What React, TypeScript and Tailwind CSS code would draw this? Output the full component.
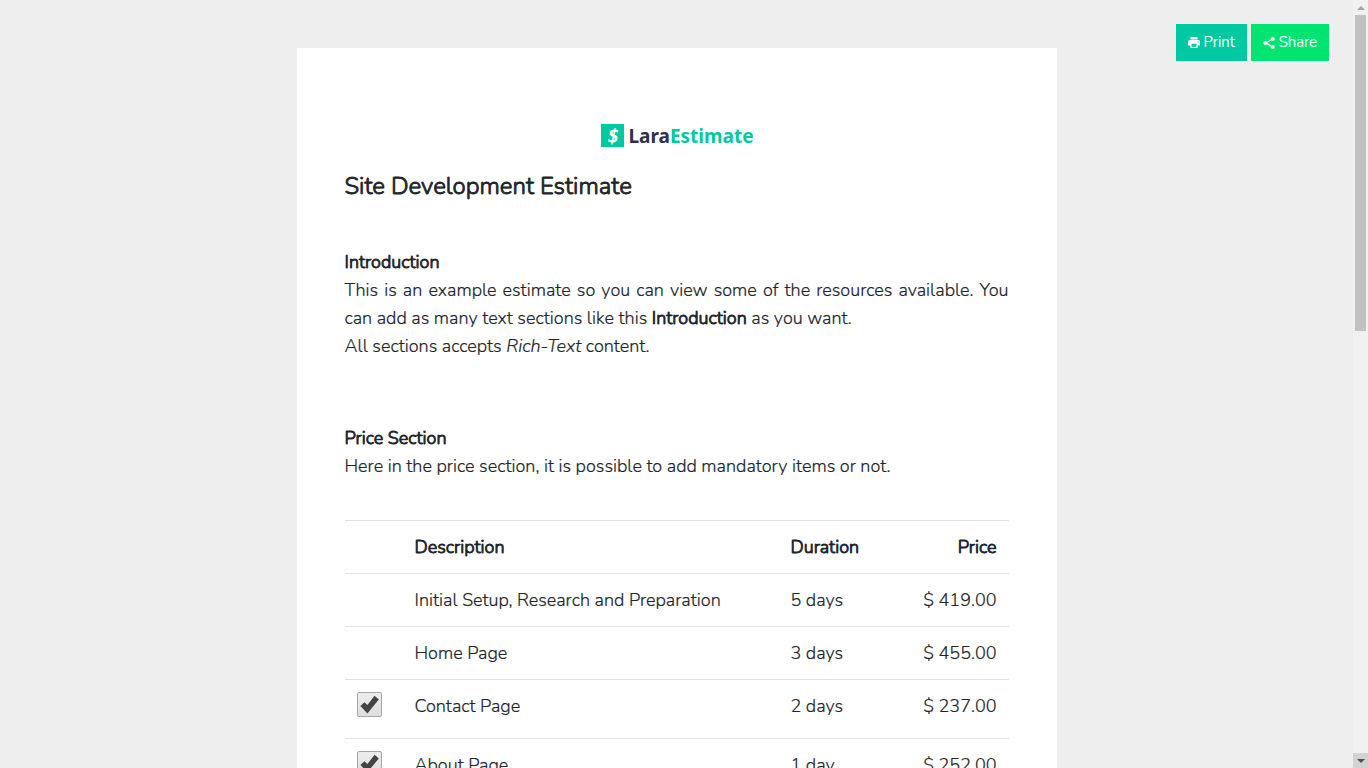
import { useState } from 'react';

type Item = {
  id: number;
  description: string;
  duration: string;
  price: number;
  optional: boolean;
};

const items: Item[] = [
  { id: 1, description: 'Initial Setup, Research and Preparation', duration: '5 days', price: 419, optional: false },
  { id: 2, description: 'Home Page', duration: '3 days', price: 455, optional: false },
  { id: 3, description: 'Contact Page', duration: '2 days', price: 237, optional: true },
  { id: 4, description: 'About Page', duration: '1 day', price: 252, optional: true },
];

// light face thickened with a stroke, keeps the light widths
const strong = 'font-light [-webkit-text-stroke:0.9px_currentColor]';

function Logo() {
  return (
    <div className="flex items-start justify-center gap-1 pl-[2px] font-['Noto_Sans','Open_Sans',sans-serif] text-[19px] leading-6 font-bold [-webkit-text-stroke:0]">
      <span className="flex size-[23px] items-center justify-center bg-[#00c9a0] text-white italic">$</span>
      <span className="text-[#32304a]">
        Lara<span className="text-[#00c9a0]">Estimate</span>
      </span>
    </div>
  );
}

function PrintIcon() {
  return (
    <svg viewBox="2 3 20 18" className="h-[11px] w-3" fill="currentColor" aria-hidden="true">
      <path d="M19 8H5c-1.66 0-3 1.34-3 3v6h4v4h12v-4h4v-6c0-1.66-1.34-3-3-3zm-3 11H8v-5h8v5zm3-7c-.55 0-1-.45-1-1s.45-1 1-1 1 .45 1 1-.45 1-1 1zm-1-9H6v4h12V3z" />
    </svg>
  );
}

function ShareIcon() {
  return (
    <svg viewBox="2 2 20 20" className="size-3" fill="currentColor" aria-hidden="true">
      <path d="m7 12 11-7M7 12l11 7" stroke="currentColor" strokeWidth="2.2" />
      <circle cx="6" cy="12" r="3.3" />
      <circle cx="18.5" cy="5.2" r="3.2" />
      <circle cx="18.5" cy="18.8" r="3.2" />
    </svg>
  );
}

function Checkbox({ label, checked, onChange }: { label: string; checked: boolean; onChange: () => void }) {
  return (
    <div className="grid h-[34px] content-start">
      <input
        type="checkbox"
        aria-label={label}
        checked={checked}
        onChange={onChange}
        className="peer col-start-1 row-start-1 size-[25px] appearance-none rounded-[2px] border border-[#a6a6a6] bg-linear-to-b from-[#ededed] to-[#dedede]"
      />
      <svg viewBox="0 0 25 25" className="pointer-events-none invisible col-start-1 row-start-1 size-[25px] peer-checked:visible" aria-hidden="true">
        <path d="M3.4 14 7.4 10.2l3 2.8L17.6 3.8l4.2 3.6L10.4 21.4z" fill="#444" />
      </svg>
    </div>
  );
}

function ScrollTrack() {
  return (
    <div className="flex w-[15px] shrink-0 flex-col items-center bg-[#f1f1f1]" aria-hidden="true">
      <div className="flex h-[15px] w-full items-center justify-center">
        <svg viewBox="0 0 8 4" className="h-1 w-2"><path d="M4 0 8 4H0z" fill="#a3a3a3" /></svg>
      </div>
      <div className="w-full flex-1 px-[2px]">
        <div className="h-3/7 bg-[#c1c1c1]" />
      </div>
      <div className="flex h-[15px] w-full items-center justify-center bg-[#d2d2d2]">
        <svg viewBox="0 0 8 4" className="h-1 w-2"><path d="M0 0h8L4 4z" fill="#505050" /></svg>
      </div>
    </div>
  );
}

export default function App() {
  const [selected, setSelected] = useState<number[]>([3, 4]);

  const toggle = (id: number) => {
    setSelected((ids) => (ids.includes(id) ? ids.filter((i) => i !== id) : [...ids, id]));
  };

  return (
    <div className="flex h-screen bg-[#eeeeee] font-[Nunito,Lato,sans-serif] text-lg leading-7 font-light text-[#212529] [-webkit-text-stroke:0.2px_currentColor]">
      <div className="relative min-w-0 flex-1">
        <div className="absolute top-6 right-6 flex gap-1 text-[15px] leading-[21px] text-white">
          <button type="button" className="flex items-center gap-1 bg-[#00c9a2] px-3 py-2">
            <PrintIcon />
            Print
          </button>
          <button type="button" className="flex items-center gap-1 bg-[#00e472] px-3 py-2">
            <ShareIcon />
            Share
          </button>
        </div>

        <main className="h-full overflow-y-auto [scrollbar-width:none]">
          <article className="mx-auto mt-12 max-w-[760px] bg-white px-12 pt-[76px] pb-12">
            <Logo />
            <h1 className={`mt-5 text-2xl leading-9 ${strong}`}>Site Development Estimate</h1>

            <section className="mt-11 text-justify">
              <h2 className={strong}>Introduction</h2>
              <p>
                This is an example estimate so you can view some of the resources available. You can add as many text
                sections like this <b className={strong}>Introduction</b> as you want.
              </p>
              <p>
                All sections accepts <i>Rich-Text</i> content.
              </p>
            </section>

            <section className="mt-16">
              <h2 className={strong}>Price Section</h2>
              <p>Here in the price section, it is possible to add mandatory items or not.</p>

              <table className="mt-10 w-full border-collapse text-left align-top">
                <thead>
                  <tr className="border-t border-[#dee2e6]">
                    <th className="w-[58px] p-3"></th>
                    <th className={`p-3 ${strong}`}>Description</th>
                    <th className={`w-[108px] p-3 ${strong}`}>Duration</th>
                    <th className={`w-[122px] p-3 text-right ${strong}`}>Price</th>
                  </tr>
                </thead>
                <tbody>
                  {items.map((item) => (
                    <tr key={item.id} className="border-t border-[#dee2e6] align-top">
                      <td className="p-3">
                        {item.optional && (
                          <Checkbox label={item.description} checked={selected.includes(item.id)} onChange={() => toggle(item.id)} />
                        )}
                      </td>
                      <td className="p-3">{item.description}</td>
                      <td className="p-3">{item.duration}</td>
                      <td className="p-3 text-right">$ {item.price.toFixed(2)}</td>
                    </tr>
                  ))}
                </tbody>
              </table>
            </section>
          </article>
        </main>
      </div>
      <ScrollTrack />
    </div>
  );
}
